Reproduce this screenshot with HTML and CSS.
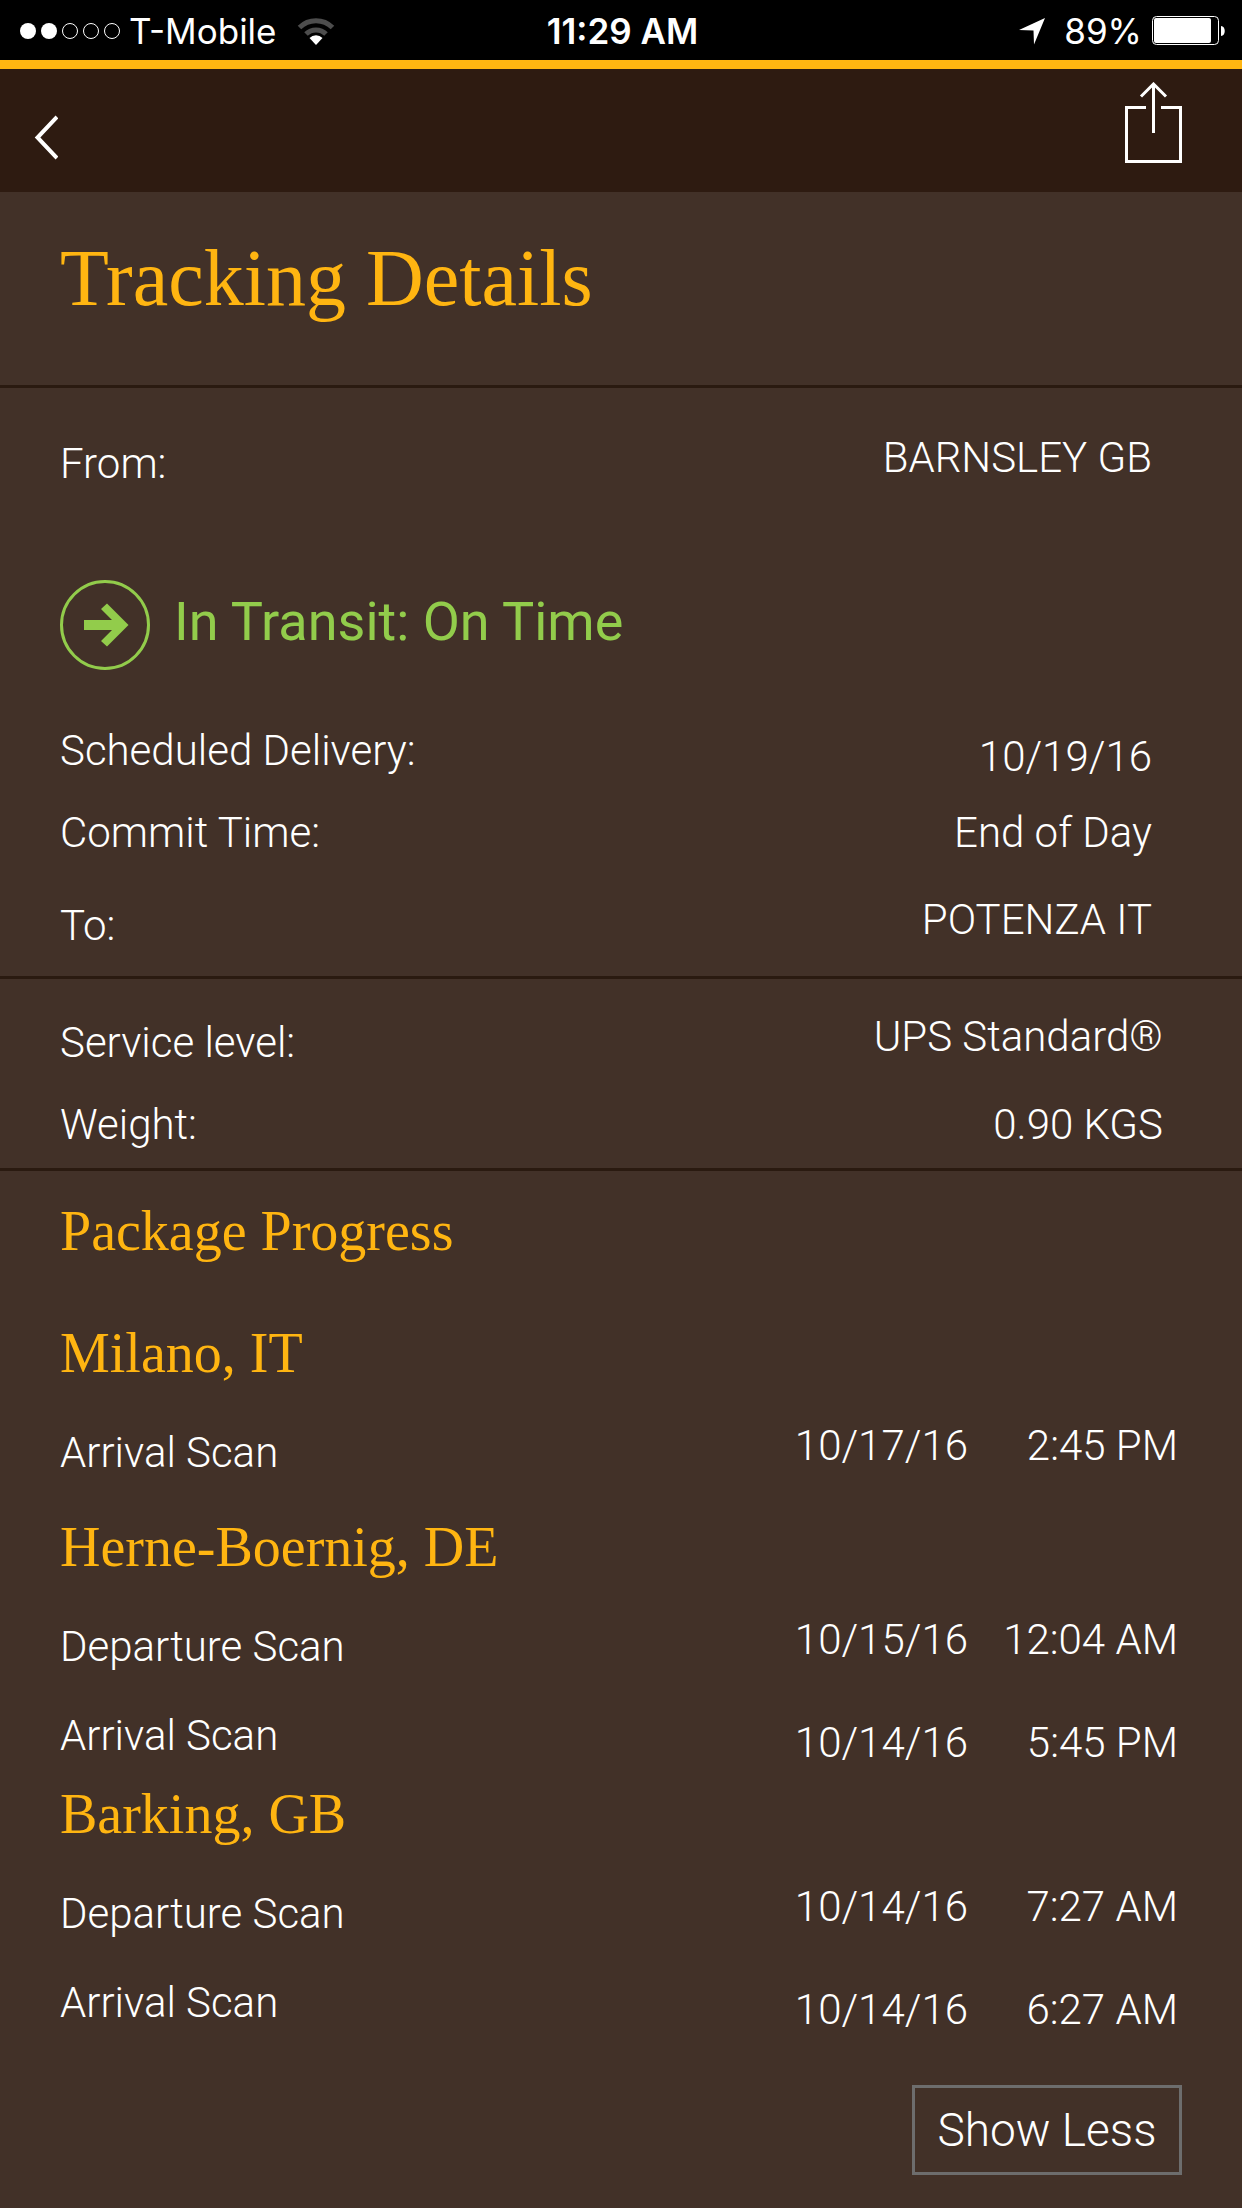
FILE: index.html
```
<!DOCTYPE html>
<html lang="en-US">
<head>
    <meta charset="UTF-8">
    <meta name="viewport" content="width=device-width, initial-scale=1.0">
    <title>Tracking Details</title>
    <link rel="stylesheet" href="styles.css">
</head>
<body>
    <div class="status-bar">
        <div class="status-left">
            <svg class="signal" width="102" height="18" viewBox="0 0 102 18" aria-hidden="true">
                <circle cx="9" cy="9" r="8" fill="#fff"/>
                <circle cx="30" cy="9" r="8" fill="#fff"/>
                <g fill="none" stroke="#fff">
                    <circle cx="51" cy="9" r="7.5"/>
                    <circle cx="72" cy="9" r="7.5"/>
                    <circle cx="93" cy="9" r="7.5"/>
                </g>
            </svg>
            <span>T-Mobile</span>
            <svg class="wifi" width="38" height="28" viewBox="0 0 38 28" aria-hidden="true">
                <g fill="none" stroke="#4d4d4d" stroke-width="5">
                    <path d="M2.5 10.5a23.5 23.5 0 0 1 33 0"/>
                    <path d="M9 17a14.2 14.2 0 0 1 20 0"/>
                </g>
                <path fill="#fff" d="M19 28l-6.5-7a9 9 0 0 1 13 0z"/>
            </svg>
        </div>
        <div class="status-time">11:29 AM</div>
        <div class="status-right">
            <svg width="28" height="28" viewBox="0 0 28 28" aria-hidden="true">
                <path fill="#fff" d="M27 1L16 27.5 15.5 13.5 1 13z"/>
            </svg>
            <span class="battery-level">89%</span>
            <svg width="74" height="30" viewBox="0 0 74 30" aria-hidden="true">
                <rect x="0.5" y="0.5" width="66" height="28" rx="4" fill="none" stroke="#fff"/>
                <rect x="2" y="2" width="57" height="25" rx="2" fill="#fff"/>
                <path fill="#fff" d="M69 10c5 0 5 10 0 10z"/>
            </svg>
        </div>
    </div>

    <header class="nav-bar">
        <button type="button" class="icon-button" aria-label="Back">
            <svg width="24" height="82" viewBox="0 0 24 82">
                <path d="M23 35L3.5 55.5 23 76" fill="none" stroke="#fff" stroke-width="4"/>
            </svg>
        </button>
        <button type="button" class="icon-button" aria-label="Share">
            <svg width="58" height="82" viewBox="0 0 58 82" fill="none" stroke="#fff" stroke-width="3">
                <path d="M21 25.5H1.5v54h54v-54H36"/>
                <path d="M28.5 2v49M16 14.5L28.5 2 41 14.5"/>
            </svg>
        </button>
    </header>

    <main>
        <section class="title">
            <h1>Tracking Details</h1>
        </section>

        <section class="shipment">
            <dl>
                <div class="row raised">
                    <dt>From:</dt>
                    <dd>BARNSLEY GB</dd>
                </div>
            </dl>
            <p class="transit">
                <svg width="90" height="90" viewBox="0 0 90 90" aria-hidden="true">
                    <circle cx="45" cy="45" r="43.5" fill="none" stroke="#92cc4b" stroke-width="3"/>
                    <path fill="#92cc4b" d="M24 40h28L41 29l6-5.5L68.5 45 47 66.5 41 61l11-11H24z"/>
                </svg>
                <span>In Transit: On Time</span>
            </p>
            <dl>
                <div class="row lowered">
                    <dt>Scheduled Delivery:</dt>
                    <dd>10/19/16</dd>
                </div>
                <div class="row">
                    <dt>Commit Time:</dt>
                    <dd>End of Day</dd>
                </div>
                <div class="row raised destination">
                    <dt>To:</dt>
                    <dd>POTENZA IT</dd>
                </div>
            </dl>
        </section>

        <section class="service">
            <dl>
                <div class="row raised">
                    <dt>Service level:</dt>
                    <dd>UPS Standard®</dd>
                </div>
                <div class="row">
                    <dt>Weight:</dt>
                    <dd>0.90 KGS</dd>
                </div>
            </dl>
        </section>

        <section class="progress">
            <h2>Package Progress</h2>

            <h3>Milano, IT</h3>
            <ul>
                <li class="row raised">
                    <span class="scan">Arrival Scan</span>
                    <span class="date">10/17/16</span>
                    <span class="time">2:45 PM</span>
                </li>
            </ul>

            <h3>Herne-Boernig, DE</h3>
            <ul>
                <li class="row raised">
                    <span class="scan">Departure Scan</span>
                    <span class="date">10/15/16</span>
                    <span class="time">12:04 AM</span>
                </li>
                <li class="row lowered">
                    <span class="scan">Arrival Scan</span>
                    <span class="date">10/14/16</span>
                    <span class="time">5:45 PM</span>
                </li>
            </ul>

            <h3>Barking, GB</h3>
            <ul>
                <li class="row raised">
                    <span class="scan">Departure Scan</span>
                    <span class="date">10/14/16</span>
                    <span class="time">7:27 AM</span>
                </li>
                <li class="row lowered">
                    <span class="scan">Arrival Scan</span>
                    <span class="date">10/14/16</span>
                    <span class="time">6:27 AM</span>
                </li>
            </ul>

            <button type="button" class="show-less">Show Less</button>
        </section>
    </main>
</body>
</html>
```
FILE: styles.css
```
:root {
    --body-font: Roboto, "Helvetica Neue", Helvetica, Arial, sans-serif;
    --heading-font: "Liberation Serif", Georgia, serif;
    --status-font: Inter, -apple-system, sans-serif;
    --bg-color: #423128;
    --bar-color: #2e1b11;
    --line-color: #2a1a10;
    --accent-color: #ffb511;
    --transit-color: #92cc4b;
}

* {
    margin: 0;
    padding: 0;
    box-sizing: border-box;
}

body {
    font-family: var(--body-font);
    font-size: 42px;
    font-weight: 300;
    color: #fff;
    background-color: var(--bg-color);
}

svg {
    display: block;
}

ul {
    list-style: none;
}

/* Status bar */
.status-bar {
    display: grid;
    grid-template-columns: 1fr auto 1fr;
    align-items: center;
    height: 60px;
    padding: 0 16px 0 19px;
    background-color: #000;
    font-family: var(--status-font);
    font-size: 35px;
    font-weight: 400;
    line-height: 62px;
}

.status-left,
.status-right {
    display: flex;
    align-items: center;
}

.status-right {
    justify-content: flex-end;
}

.signal {
    margin-right: 8px;
}

.wifi {
    margin-left: 20px;
}

.status-time {
    font-weight: 600;
}

.battery-level {
    margin: 0 10px 0 18px;
}

/* Navigation bar */
.nav-bar {
    display: flex;
    justify-content: space-between;
    padding: 13px 59px 28px 34px;
    background-color: var(--bar-color);
    border-top: 9px solid var(--accent-color);
}

.icon-button {
    background: none;
    border: none;
}

/* Sections */
.title {
    padding: 40px 60px 61px;
    border-bottom: 3px solid var(--line-color);
}

h1,
h2,
h3 {
    font-family: var(--heading-font);
    font-weight: 400;
    color: var(--accent-color);
}

h1 {
    font-size: 80px;
    line-height: 92px;
}

h2,
h3 {
    font-size: 56px;
    line-height: 64px;
}

.shipment {
    padding: 50px 90px 24px 60px;
    border-bottom: 3px solid var(--line-color);
}

.service {
    padding: 38px 79px 17px 60px;
    border-bottom: 3px solid var(--line-color);
}

.row {
    display: flex;
    justify-content: space-between;
    align-items: center;
    line-height: 40px;
}

.row.raised {
    align-items: flex-start;
}

.row.lowered {
    align-items: flex-end;
}

dt {
    line-height: 52px;
}

.row + .row {
    margin-top: 30px;
}

.row + .destination {
    margin-top: 41px;
}

.transit {
    display: flex;
    gap: 24px;
    margin: 90px 0 55px;
    font-size: 54px;
    font-weight: 400;
    line-height: 84px;
    color: var(--transit-color);
}

/* Package progress */
.progress {
    padding: 28px 60px 32px;
}

.progress ul {
    padding-right: 4px;
}

h2 {
    margin-bottom: 58px;
}

h3 {
    margin-bottom: 41px;
}

.progress .row {
    margin: 0 0 35px;
}

.progress .row.lowered {
    margin-bottom: 19px;
}

.scan {
    flex: 1;
    line-height: 54px;
}

.time {
    width: 210px;
    text-align: right;
}

.show-less {
    display: block;
    min-width: 270px;
    height: 90px;
    margin: 55px 0 0 auto;
    background: none;
    border: 3px solid #6d6d6d;
    color: #fff;
    font: 300 46px var(--body-font);
}
```
